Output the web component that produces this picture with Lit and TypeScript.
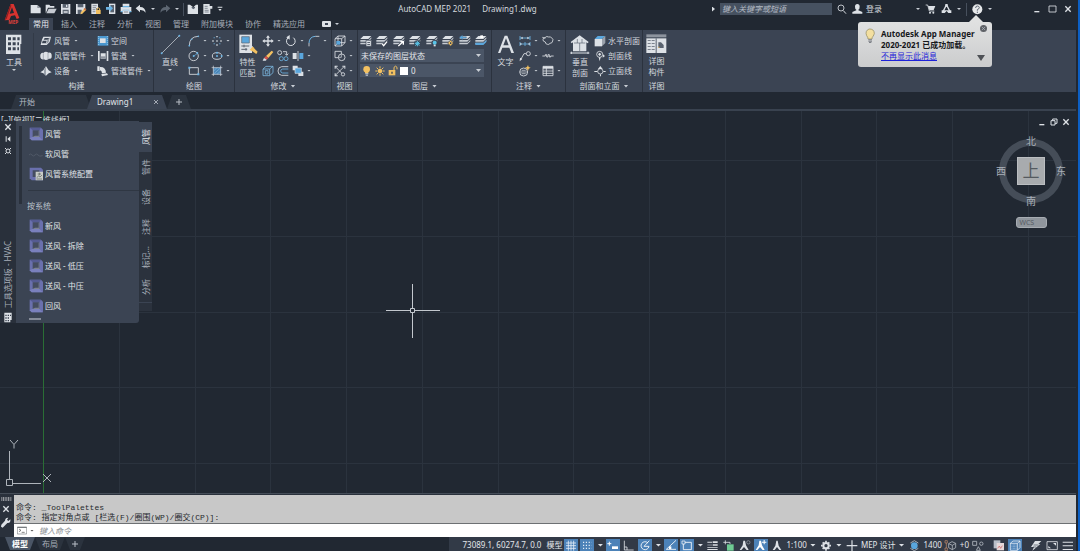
import { LitElement, html, css, svg, nothing } from "lit";
import { customElement, property } from "lit/decorators.js";
import { classMap } from "lit/directives/class-map.js";

const L = "#dde1e6";
const B = "#6bb3e3";
const Y = "#f3c161";
const D = "#3b4453";

type Glyph = [number, number, unknown];

/* Each glyph is drawn on a grid three times finer than its size in pixels. */
const glyphs: Record<string, Glyph> = {
  newFile: [12, 12, svg`<path fill=${L} d="M2 6h20l10 9v16H2z"/><path fill="#8d949e" d="M22 6v9h10z"/>`],
  open: [12, 12, svg`<path fill=${L} d="M2 5h11l3 4h12v5H9L3 29H2z"/><path fill="#c5cad1" d="M11 17h24l-7 14H4z"/>`],
  save: [12, 12, svg`<path fill=${L} d="M3 3h28v30H3z"/><path fill="#59626f" d="M8 3h17v11H8zM8 20h18v13H8z"/><path fill=${L} d="M18 5h4v7h-4zM11 24h12v2H11zM11 28h12v2H11z"/>`],
  saveAs: [12, 12, svg`<path fill=${L} d="M3 3h28v14L20 33H3z"/><path fill="#59626f" d="M8 3h17v10H8zM8 20h12v13H8z"/><path fill=${Y} d="M29 15l5 5-12 12-6 2 2-6z"/><path fill="#c46a4a" d="M29 15l5 5-3 3-5-5z"/>`],
  sheetLock: [12, 12, svg`<path fill=${L} d="M4 2h20v14h-5v17H4z"/><path stroke="#59626f" stroke-width="2" d="M8 8h12M8 14h10M8 20h8M8 26h8"/><path fill=${Y} d="M18 21h14v12H18z"/><path fill="none" stroke=${Y} stroke-width="3" d="M21 21v-4q4-5 8 0v4"/>`],
  sheetIn: [12, 12, svg`<path fill=${L} d="M12 2h19v31H12z"/><path fill="#59626f" d="M16 6h11v22H16z"/><path fill=${B} d="M3 12h11V6l10 10-10 10v-6H3z"/>`],
  print: [12, 12, svg`<path fill=${L} d="M8 2h20v8H8zM2 12h32v14H2z"/><path fill=${B} d="M8 9h20v4H8zM2 24h6v-4h20v4h6v4H2z"/><path fill=${L} d="M8 22h20v11H8z"/><path stroke="#59626f" stroke-width="2" d="M12 27h12"/>`],
  undo: [12, 12, svg`<path fill=${L} d="M2 16L15 5v7q16 0 17 17-5-9-17-8v7z"/>`],
  redo: [12, 12, svg`<path fill="#5d6672" d="M34 16L21 5v7Q5 12 4 29q5-9 17-8v7z"/>`],
  castle: [12, 12, svg`<path fill=${L} d="M2 5h7l10 8 8-8h6v28H2z"/><path fill="#59626f" d="M14 15l5 4 5-4v-3H14z"/>`],
  sheetEdit: [12, 12, svg`<path fill=${L} d="M4 3h19v6h8v8h-6v16H4z"/><path stroke="#59626f" stroke-width="2" d="M8 10h9M8 16h9M8 22h12M8 27h12"/>`],
  more: [6, 6, svg`<path fill=${L} d="M2 2h14v3H2zM4 9h10l-5 6z"/>`],
  logo: [18, 24, svg`<path fill="#d8332f" fill-rule="evenodd" d="M2 52L20 3h9l17 42-8 3-5-11-12 2-5 12zM24 13l-7 19 13-2z"/><path fill="#8e1f20" d="M2 52L20 3l2 5L8 47z"/><text x="13" y="63" font-size="14" font-weight="700" font-family="Open Sans, sans-serif" fill="#e0413b">MEP</text>`],
  building: [18, 21, svg`<path fill=${L} d="M3 2h46v28h-3v30H3z"/><path fill=${D} d="M9 10h9v9H9zM23 10h9v9h-9zM37 10h7v9h-7zM9 25h9v9H9zM23 25h9v9h-9zM37 25h5v9h-5zM9 40h9v9H9zM23 40h9v9h-9zM37 40h5v9h-5z"/>`],
  duct: [12, 12, svg`<path fill=${L} d="M10 5h23l-4 16-9 9H2l4-16z"/><path fill=${D} d="M14 9h14l-2 5H11zM8 17h12l-2 8H6z"/><path fill="#8d949e" d="M22 15l7-8-3 14-7 7z"/>`],
  fitting: [12, 12, svg`<path fill=${L} d="M1 14q3-7 9-5 7-7 15-1 9-2 10 6v8q-2 6-8 4-9 7-15 2-10 2-11-6z"/><path stroke="#8d949e" stroke-width="2" fill="none" d="M10 10v18M24 9v19"/>`],
  device: [12, 12, svg`<path fill=${L} d="M18 4l8 12 9 6-9 3-8 7-8-7-9-3 9-6z"/><path fill="#9aa1ab" d="M18 4v28l-6-7V14z"/>`],
  space: [12, 12, svg`<path fill="#4a97cf" d="M2 3h32v29H2z"/><path fill=${L} d="M9 10h17v14H9z"/><path stroke="#b9dcf3" stroke-width="2" d="M5 3v29M31 3v29" stroke-dasharray="3 3"/>`],
  pipe: [12, 12, svg`<path fill=${L} d="M3 3h5v30H3zM29 3h5v30h-5zM11 10h15v16H11z"/><path fill="#8d949e" d="M11 19h15v7H11z"/>`],
  elbow: [12, 12, svg`<path fill=${L} d="M1 4h7v14H1zM9 6q17-1 18 17l-12 2q0-8-6-9zM13 27l17-2 3 5-18 4z"/>`],
  line: [21, 21, svg`<path stroke=${L} stroke-width="2" d="M5 58L58 5"/><circle cx="5" cy="58" r="3" fill=${B}/><circle cx="58" cy="5" r="3" fill=${B}/>`],
  arc: [12, 12, svg`<path fill="none" stroke=${L} stroke-width="2.500" d="M4 32Q4 5 31 4"/><circle cx="4" cy="32" r="2.500" fill=${B}/><circle cx="31" cy="4" r="2.500" fill=${B}/><circle cx="11" cy="13" r="2.500" fill=${B}/>`],
  circle: [12, 12, svg`<circle cx="17" cy="18" r="14" fill="none" stroke=${L} stroke-width="2.500"/><path stroke=${B} stroke-width="2" d="M17 18l12-8"/><circle cx="17" cy="18" r="3" fill=${B}/><circle cx="28" cy="9" r="3" fill=${B}/>`],
  rect: [12, 12, svg`<path fill="none" stroke=${L} stroke-width="2.500" d="M4 8h27v20H4z"/><path fill=${B} d="M1 5h6v6H1zM28 25h6v6h-6z"/>`],
  points: [12, 12, svg`<path fill=${L} d="M16 3h4v4h-4zM4 16h4v4H4zM16 16h4v4h-4zM28 16h4v4h-4zM16 28h4v4h-4z"/><path fill=${B} d="M8 7h3v3H8zM25 7h3v3h-3zM8 25h3v3H8zM25 25h3v3h-3z"/>`],
  ellipse: [12, 12, svg`<ellipse cx="18" cy="18" rx="14" ry="10" fill="none" stroke=${L} stroke-width="2.500"/><circle cx="18" cy="18" r="3" fill=${B}/><circle cx="18" cy="8" r="3" fill=${B}/><circle cx="32" cy="18" r="3" fill=${B}/>`],
  hatch: [12, 12, svg`<path fill="#4a86b8" d="M7 8h22v20H7z"/><path stroke=${L} stroke-width="2" fill="none" d="M7 2v31M29 2v31M2 8h32M2 28h32"/><path stroke="#9bc9e8" stroke-width="1.500" d="M8 27L28 9M8 18l10-10M18 28l11-10"/>`],
  match: [20, 21, svg`<path fill=${L} d="M4 2h38v55H4z"/><path fill="#5aa6dc" stroke="#59626f" stroke-width="2" d="M11 8h23v19H11z"/><path stroke="#59626f" stroke-width="3" d="M10 36h24M10 46h18M18 32v8M24 42v8"/><path fill=${Y} d="M33 45l8-9 18 17-4 7z"/><path fill=${L} d="M28 45l11-12 6 5-12 13z"/><path fill=${Y} d="M44 38l5 4-8 9-6-4z"/>`],
  move: [12, 12, svg`<path fill=${L} d="M18 1l6 7h-4v8h8v-4l7 6-7 6v-4h-8v8h4l-6 7-6-7h4v-8H8v4l-7-6 7-6v4h8V8h-4z"/>`],
  rotate: [12, 12, svg`<path fill="none" stroke=${L} stroke-width="3" d="M10 8a13 13 0 1 0 15 0"/><path fill=${L} d="M14 0v14L4 7z"/>`],
  fillet: [12, 12, svg`<path fill="none" stroke=${B} stroke-width="3" d="M3 24Q4 5 22 4"/><path stroke=${L} stroke-width="2.500" d="M3 24v10M22 4h12"/>`],
  erase: [12, 12, svg`<path fill=${Y} d="M29 2l5 4-15 18-7-6z"/><path fill="#d9534a" d="M12 18l7 6-5 5-8-5z"/><path fill=${L} d="M6 24l8 5-3 3H2z"/>`],
  copy: [12, 12, svg`<circle cx="8" cy="8" r="6" fill="none" stroke=${L} stroke-width="2.500"/><circle cx="13" cy="26" r="6" fill="none" stroke=${B} stroke-width="2.500"/><circle cx="27" cy="26" r="6" fill="none" stroke=${B} stroke-width="2.500"/><path fill="none" stroke=${L} stroke-width="2.500" d="M18 5h11v10M24 11l5 5 5-5"/>`],
  mirror: [12, 12, svg`<path fill=${L} d="M2 9h12v18H2z"/><path fill="#5aa6dc" d="M22 9h12v18H22z"/><path stroke=${L} stroke-width="2.500" d="M18 3v30"/>`],
  offset3d: [12, 12, svg`<path fill="none" stroke="#79b5dc" stroke-width="2.500" d="M3 12h20v20H3zM3 12l9-8h21v19l-10 9M23 12l10-8M10 17h8v10h-8z"/>`],
  offset: [12, 12, svg`<path fill="none" stroke=${L} stroke-width="2.500" d="M34 5H14Q3 6 3 18t11 13h20"/><path fill="none" stroke=${B} stroke-width="2.500" d="M34 12H17q-6 1-6 6t6 6h17"/>`],
  stack: [12, 12, svg`<path fill=${L} d="M2 2h15v14H2zM19 20h15v13H19z"/><path fill="#5aa6dc" stroke=${L} stroke-width="2" d="M9 9h19v16H9z"/>`],
  cube: [12, 12, svg`<path fill="none" stroke=${L} stroke-width="2.500" d="M3 11h20v22H3zM3 11l9-8h21v20l-10 10M23 11l10-8M12 3v20h21M12 23L3 33"/><path fill="#5aa6dc" d="M7 18h12v11H7z"/>`],
  shapes: [12, 12, svg`<path fill="none" stroke=${L} stroke-width="2.500" d="M3 4h19v19H3z"/><circle cx="23" cy="22" r="10" fill=${D} stroke=${L} stroke-width="2.500"/><path stroke=${L} stroke-width="2" fill="none" d="M14 22h8v-9"/>`],
  cross: [12, 12, svg`<path fill="none" stroke=${L} stroke-width="2.500" d="M4 5l22 22M4 31L29 6"/><circle cx="27" cy="28" r="5" fill=${D} stroke=${L} stroke-width="2.500"/><path fill=${L} d="M2 2h9v3H5v6H2zM25 2h9v9h-3V5h-6zM2 25h3v6h6v3H2z"/>`],
  layer: [12, 12, svg`<path fill=${L} d="M10 3h24l-9 9H1z"/><path fill="#c5cad1" d="M1 15h25l8-8v4l-9 9H1zM1 23h25l8-8v4l-9 9H1z"/>`],
  bulb: [10, 12, svg`<circle cx="14" cy="13" r="10" fill=${Y}/><path fill=${Y} d="M9 18h10v7H9z"/><path fill="#c8ccd2" d="M10 25h9v3h-9zM11 29h7v3h-7z"/>`],
  sun: [12, 12, svg`<circle cx="18" cy="18" r="7" fill=${Y}/><path stroke=${Y} stroke-width="3" d="M18 4v6M18 26v6M4 18h6M26 18h6M8 8l4 4M24 24l4 4M28 8l-4 4M12 24l-4 4"/>`],
  lock: [10, 12, svg`<path fill=${Y} d="M2 15h20v16H2z"/><path fill="none" stroke=${Y} stroke-width="3" d="M18 15V7q5-7 9 0v6"/><path fill=${D} d="M10 20h4v6h-4z"/>`],
  textA: [18, 21, svg`<path fill=${L} fill-rule="evenodd" d="M3 57L23 5h8l20 52h-8l-6-16H16l-6 16zM19 34h16l-8-21z"/>`],
  dims: [12, 12, svg`<path stroke=${B} stroke-width="2.500" fill="none" d="M3 3v12M33 3v12M3 9h30M3 27h30M3 21v12M33 21v12M18 21v12"/><path fill=${L} d="M5 9l6-4v8zM31 9l-6-4v8zM9 27l-5-4v8zM27 27l5-4v8z"/>`],
  leader: [12, 12, svg`<circle cx="28" cy="11" r="6" fill="none" stroke=${L} stroke-width="2.500"/><path fill="none" stroke=${L} stroke-width="2.500" d="M22 11h-7L5 29"/><path fill=${L} d="M2 34l1-11 7 4z"/>`],
  tagGlobe: [12, 12, svg`<circle cx="14" cy="21" r="12" fill="none" stroke=${L} stroke-width="2.500"/><path stroke=${L} stroke-width="2" d="M3 21h23M8 16h12M8 26h12"/><path fill=${Y} d="M27 0l2 6 6 2-6 3-2 7-3-7-6-3 6-2z"/>`],
  cloud: [12, 12, svg`<path fill="none" stroke=${L} stroke-width="2.500" d="M9 8q5-6 11-2 7-2 9 3 6 3 3 9-1 7-8 7-3 5-8 3-6-1-6-7-8-2-7-7 0-6 6-6z"/><path stroke=${L} stroke-width="2.500" d="M1 7l9 3"/>`],
  breakLine: [12, 12, svg`<path fill="none" stroke=${L} stroke-width="2.500" d="M1 18h9v-4h4v7h4v-7h4v7h4v-3h9"/>`],
  table: [12, 12, svg`<path fill="none" stroke=${L} stroke-width="2.500" d="M3 4h30v28H3zM3 11h30M3 18h30M3 25h30M13 4v28"/><path fill=${L} d="M3 4h30v5H3z"/>`],
  house: [20, 21, svg`<path fill=${L} d="M29 4l27 20-3 4-4-3v27H9V25l-4 3-3-4z"/><path stroke="#59626f" stroke-width="2" fill="none" d="M12 27h34M29 27v24M22 27V15M36 27V15"/><path stroke=${L} stroke-width="3" d="M1 57h57M4 53v7M54 53v7"/>`],
  cubeSolid: [12, 12, svg`<path fill=${L} d="M2 12h22v22H2z"/><path fill="#5aa6dc" d="M2 12l9-9h23l-10 9z"/><path fill="#9aa1ab" d="M24 12l10-9v21L24 34z"/>`],
  pin: [12, 12, svg`<circle cx="17" cy="13" r="9" fill="none" stroke=${L} stroke-width="2.500"/><path fill=${L} d="M17 8l5 5-5 5-5-5zM14 22h6l-3 12zM27 13l6 5-7 5z"/>`],
  elev: [12, 12, svg`<circle cx="19" cy="19" r="8" fill="none" stroke=${L} stroke-width="2.500"/><path fill=${L} d="M1 18h9v3H1zM28 18h7v3h-7zM12 12l7-9 7 9zM18 28h3v6h-3z"/>`],
  detail: [21, 20, svg`<path fill="#8d949e" d="M1 1h60v9H1z"/><path fill=${L} d="M1 13h60v44H1z"/><path fill="#59626f" d="M29 13h3v44h-3zM5 18h9v2H5zM17 18h9v2h-9zM5 27h9v2H5zM17 27h9v2h-9zM5 36h9v2H5zM17 36h9v2h-9zM5 45h9v2H5zM17 45h9v2h-9zM37 25h8l8 8v9H37z"/><path fill=${Y} d="M37 38h3v4h-3z"/>`],
  search: [10, 11, svg`<circle cx="12" cy="12" r="9" fill="none" stroke=${L} stroke-width="2.500"/><path stroke=${L} stroke-width="3" d="M19 20l8 9"/>`],
  person: [11, 12, svg`<path fill=${L} d="M16 3q7 0 7 8t-4 9v2l12 5v5H1v-5l12-5v-2q-4-1-4-9t7-8z"/>`],
  cart: [11, 12, svg`<path fill="none" stroke=${L} stroke-width="2.500" d="M2 6h6l5 18h15"/><path fill=${L} d="M9 9h22l-5 12H13z"/><circle cx="15" cy="29" r="3" fill=${L}/><circle cx="25" cy="29" r="3" fill=${L}/>`],
  share: [11, 12, svg`<path fill="none" stroke=${L} stroke-width="4" d="M16 6L6 26M17 6l10 20"/><path fill=${L} d="M13 3h7v8h-7zM2 22h29v8h-9l-5-6-6 6H2z"/>`],
  help: [11, 11, svg`<circle cx="16" cy="16" r="15" fill="#e6e8ea"/><path fill="none" stroke="#59626f" stroke-width="3" d="M11 12q0-6 5-6t6 5q0 3-6 6v3M16 23v4"/>`],
  minimize: [8, 10, svg`<path fill=${L} d="M4 21h15v4H4z"/>`],
  maximize: [9, 10, svg`<path fill="none" stroke=${L} stroke-width="2.500" d="M3 6h21v18H3z"/>`],
  restore: [8, 8, svg`<path fill="none" stroke=${L} stroke-width="3" d="M3 8h12v13H3zM8 8V3h13v13h-6"/>`],
  close: [8, 8, svg`<path stroke=${L} stroke-width="4" d="M4 4l16 16M20 4L4 20"/>`],
  closeThin: [6, 6, svg`<path stroke="#b8bec6" stroke-width="2.500" d="M3 3l12 12M15 3L3 15"/>`],
  plus: [8, 8, svg`<path stroke="#b8bec6" stroke-width="3" d="M12 3v18M3 12h18"/>`],
  pinBar: [8, 8, svg`<path fill=${L} d="M5 4h3v16H5zM19 4v16l-9-8z"/>`],
  gearSmall: [8, 8, svg`<circle cx="12" cy="12" r="6" fill="none" stroke=${L} stroke-width="3"/><path stroke=${L} stroke-width="3" d="M3 3l5 5M16 16l5 5M21 3l-5 5M8 16l-5 5"/>`],
  sheetGrid: [8, 11, svg`<path fill=${L} d="M1 2h22v22h-4v7H1z"/><path fill="#3a4250" d="M4 8h4v4H4zM11 8h4v4h-4zM18 8h3v4h-3zM4 16h4v4H4zM11 16h4v4h-4zM4 24h4v4H4zM11 24h4v4h-4z"/>`],
  ductBlue: [14, 14, svg`<path fill="#6a70ad" d="M2 2h34l6 6v32H8L2 34z"/><path fill="#555b92" d="M2 2h34l-5 8H11z"/><path fill="#7a80bd" d="M2 34l9-5h20l10 11H8z"/><path fill="#454d60" d="M11 10h20v20H11z"/><path fill="#7c828f" d="M12 29l6-3h11V11h2v19H12z"/>`],
  flex: [14, 14, svg`<path fill="none" stroke="#5b6471" stroke-width="2" d="M0 24q5-6 9 0t9 0 9 0 14 2"/>`],
  ductCfg: [14, 14, svg`<path fill="#6a70ad" d="M2 2h34l6 6v32H8L2 34z"/><path fill="#454d60" d="M11 10h20v20H11z"/><path fill="#c9cdc8" d="M20 14h22v26H20z"/><path stroke="#555d5a" stroke-width="2" fill="none" d="M23 32l6-5 4 3 6-6M31 17v8M26 21h10M23 36h16"/>`],
  bulbOutline: [10, 16, svg`<path fill="#f3dfa0" stroke="#8b8457" stroke-width="2" d="M9 33q0-6-4-10-6-14 7-20 15-1 16 13-1 5-4 9-3 3-3 8z"/><path fill="#7d8087" d="M10 34h11v3H10zM10 38h11v3H10zM12 42h7v3h-7z"/>`],
  prompt: [10, 9, svg`<path fill="none" stroke="#777c80" stroke-width="2" d="M1 3h28v21H1z"/><path fill="none" stroke="#444" stroke-width="2" d="M6 9l6 4-6 4M14 19h9"/><path fill="#777c80" d="M1 3h28v3H1z"/>`],
  grip: [11, 4, svg`<path stroke="#fff" stroke-width="3" stroke-dasharray="3 2" d="M1 3h31M1 9h31"/>`],
  wrench: [10, 11, svg`<path fill=${L} d="M28 7l-6 5-4-4 4-6q-9-1-10 9L1 23l-1 6 5 3 14-14q11 1 9-11z"/>`],
  grid: [14, 13, svg`<path stroke="#e4edf6" stroke-width="2.500" d="M13 5v30M21 5v30M29 5v30M6 12h30M6 20h30M6 28h30"/>`],
  dots: [14, 13, svg`<path stroke="#e4edf6" stroke-width="3.500" stroke-dasharray="3.500 5" d="M9 10h26M9 19h26M9 28h26"/>`],
  snap: [14, 13, svg`<path stroke="#fff" stroke-width="3" d="M4 14h12M10 8v12"/><path fill="#fff" d="M18 22h18v8H18z"/>`],
  ortho: [14, 13, svg`<path fill="none" stroke=${L} stroke-width="2.500" d="M7 5v28h28M7 24h8v9"/>`],
  polar: [14, 13, svg`<path fill="none" stroke="#fff" stroke-width="2.500" d="M30 12a12 12 0 1 0 3 10H18L34 5"/>`],
  angle: [14, 13, svg`<path fill="none" stroke="#fff" stroke-width="2.500" d="M36 4L7 31h29"/><path fill="#fff" d="M15 22h7v8h-7z"/>`],
  osnap: [14, 13, svg`<path fill="none" stroke="#fff" stroke-width="2.500" d="M10 10h24v22H10z"/><path fill="#4c82b8" stroke="#fff" stroke-width="2" d="M6 6h9v9H6z"/>`],
  weights: [14, 13, svg`<path fill=${L} d="M4 8h14v3H4zM20 7h15v5H20zM4 17h14v2H4zM20 16h15v4H20zM4 24h31v2H4zM4 30h31v3H4z"/>`],
  cycle: [14, 13, svg`<path fill="#6ecb93" d="M15 16h20v19H15z"/><path stroke=${L} stroke-width="2.500" fill="none" d="M4 10h20v5M10 4v12"/>`],
  annoVis: [14, 13, svg`<path fill=${L} d="M16 5h5l3 14 8 14h-6l-8-9-8 9H5l9-14z"/><circle cx="31" cy="10" r="5" fill="none" stroke="#9aa1ab" stroke-width="2"/>`],
  annoAuto: [14, 13, svg`<path fill="#fff" d="M16 5h5l3 14 8 14h-6l-8-9-8 9H5l9-14zM29 3h3v5h5v3h-5v5h-3v-5h-5V8h5z"/>`],
  anno: [14, 13, svg`<path fill=${L} d="M19 5h4l3 15 8 13h-6l-7-9-7 9H8l8-13z"/>`],
  gear: [14, 13, svg`<circle cx="21" cy="20" r="8" fill="none" stroke=${L} stroke-width="6"/><path stroke=${L} stroke-width="5" d="M21 5v5M21 30v5M6 20h5M31 20h5M11 10l3 3M28 27l3 3M31 10l-3 3M14 27l-3 3"/>`],
  plusBig: [14, 13, svg`<path stroke=${L} stroke-width="3.500" d="M21 4v32M5 20h32"/>`],
  planeCut: [14, 13, svg`<circle cx="19" cy="20" r="10" fill="#5aa6dc"/><path fill="none" stroke=${L} stroke-width="2" d="M7 12l12-7 12 7M7 28l12 7 12-7"/>`],
  boxes: [14, 13, svg`<path fill="none" stroke="#aeb4bc" stroke-width="2.500" d="M14 14l10-6 11 5v13l-10 6-11-6zM14 14l11 5 10-6M25 19v13"/><path fill="none" stroke="#c98f6d" stroke-width="2" d="M3 5h7v7H3zM3 27h7v8H3zM7 12v15"/>`],
  isolate: [14, 13, svg`<path fill="none" stroke="#b4bac2" stroke-width="2.500" d="M5 7h12v12H5zM16 34l6-11 6 11z"/><circle cx="31" cy="14" r="5" fill="none" stroke="#b4bac2" stroke-width="2.500"/>`],
  pagesRed: [14, 13, svg`<path fill="#b9bfc8" d="M5 4h20v24H5z"/><path fill="#e6d9d9" d="M14 12h22v22H14z"/><path fill="none" stroke="#c95858" stroke-width="2" d="M17 28l5-7 4 7 5-8"/>`],
  hatchCube: [14, 13, svg`<path fill="none" stroke="#fff" stroke-width="2" d="M7 13l8-7h21v20l-8 8H7zM7 13h21v21M28 13l8-7"/><path stroke="#cfe2f3" stroke-width="2" stroke-dasharray="2 2" d="M11 18h14M11 23h14M11 28h14"/>`],
  bolt: [14, 13, svg`<path fill=${L} d="M18 6h19l-9 9h6L10 35l5-11H6z"/><path stroke="#3a4250" stroke-width="2" d="M14 18h14M12 24h10"/>`],
  screen: [14, 13, svg`<path fill="none" stroke=${L} stroke-width="2.500" d="M6 8h31v24H6z"/><path fill=${L} d="M24 12h9v8zM10 28v-7l8 7z"/>`],
  menu: [14, 13, svg`<path fill=${L} d="M5 8h31v3H5zM5 19h31v3H5zM5 30h31v3H5z"/>`],
};

const layerMarks: Record<string, unknown> = {
  props: svg`<path fill=${L} stroke=${D} stroke-width="2" d="M18 16h16v18H18z"/><path fill="#59626f" d="M22 21h8v3h-8zM22 27h8v3h-8z"/>`,
  check: svg`<path fill="none" stroke=${D} stroke-width="8" d="M18 26l5 6 10-12"/><path fill="none" stroke="#fff" stroke-width="4" d="M18 26l5 6 10-12"/>`,
  arrow: svg`<path fill="none" stroke=${D} stroke-width="8" d="M16 33l14-13"/><path fill="none" stroke="#fff" stroke-width="4" d="M16 33l14-13M22 20h9v9"/>`,
  freeze: svg`<circle cx="25" cy="26" r="10" fill=${D}/><path stroke="#58c4e8" stroke-width="3" d="M25 18v16M17 26h16M19 20l12 12M31 20L19 32"/>`,
  off: svg`<circle cx="26" cy="25" r="10" fill=${D}/><circle cx="26" cy="23" r="6" fill="#58c4e8"/><path fill=${L} d="M23 29h6v5h-6z"/>`,
  lockMark: svg`<path fill=${Y} stroke=${D} stroke-width="2" d="M26 15l8 9-8 10-9-10z"/><path fill=${D} d="M24 22h4v5h-4z"/>`,
  prev: svg`<path fill="#5aa6dc" stroke=${D} d="M0 7l11-7v5h11v5H11v5z"/>`,
  match: svg`<path fill="#5aa6dc" d="M1 23h25l8-8v6l-9 9H1z"/><path fill="#fff" d="M16 1h8v8h-8z"/>`,
};

const paint = (name: string) => {
  const [w, h, body] = glyphs[name];
  return html`<svg class="glyph" width=${w} height=${h} viewBox="0 0 ${w * 3} ${h * 3}" aria-hidden="true">${body}</svg>`;
};

const caret = html`<span class="caret"></span>`;

const base = css`
  * { box-sizing: border-box; }
  button {
    display: flex; align-items: center; justify-content: center;
    background: none; border: 0; padding: 0; margin: 0;
    font: inherit; color: inherit; white-space: nowrap; cursor: default;
  }
  .glyph { display: block; flex: none; }
  .caret {
    flex: none; width: 4px; height: 2px; background: #c9ced5;
    clip-path: polygon(0 0, 100% 0, 50% 100%);
  }
`;

@customElement("ribbon-panel")
class RibbonPanel extends LitElement {
  @property() label = "";
  @property({ type: Boolean }) expandable = false;
  static styles = [base, css`
    :host { display: flex; flex-direction: column; border-right: 1px solid #2b323e; padding-top: 3px; }
    .body { display: flex; flex: 1; }
    .title { display: flex; align-items: center; justify-content: center; gap: 4px; height: 12px; line-height: 12px; white-space: nowrap; }
    .title .caret { height: 3px; width: 5px; }
  `];
  render() {
    return html`<div class="body"><slot></slot></div>
      <div class="title">${this.label}${this.expandable ? caret : nothing}</div>`;
  }
}

@customElement("view-cube")
class ViewCube extends LitElement {
  static styles = [base, css`
    :host { display: flex; flex-direction: column; align-items: center; gap: 9px; }
    .compass { display: grid; grid-template: 14px 1fr 14px / 14px 1fr 14px; place-items: center; width: 74px; height: 74px; position: relative; font-size: 10px; line-height: 14px; color: #a9b0b8; }
    .ring { position: absolute; inset: 5px; border: 7px solid #454d58; border-radius: 50%; }
    .n, .s, .w, .e { z-index: 1; }
    .n { grid-area: 1 / 2; } .w { grid-area: 2 / 1; } .e { grid-area: 2 / 3; } .s { grid-area: 3 / 2; }
    .top { grid-area: 2 / 2; width: 28px; height: 28px; background: #a8abae; border: 1px solid #bbbec1; color: #555a60; font-size: 17px; line-height: 26px; z-index: 1; }
    .wcs { width: 31px; height: 11px; justify-content: flex-start; padding-left: 3px; border-radius: 3px; background: #8f959c; border: 1px solid #a7acb2; color: #565c64; font-size: 7px; line-height: 9px; }
  `];
  render() {
    return html`<div class="compass"><span class="ring"></span>
        <button class="n">北</button><button class="w">西</button>
        <button class="top">上</button>
        <button class="e">东</button><button class="s">南</button></div>
      <button class="wcs">WCS</button>`;
  }
}

@customElement("app-root")
class AppRoot extends LitElement {
  static styles = [base, css`
    :host {
      display: flex; flex-direction: column; height: 100vh; overflow: hidden; position: relative;
      background: #212832; border-right: 2px solid #0c5fc4; padding-right: 2px; color: #d3d8de;
      font: 8px/12px "Noto Sans", "Noto Sans CJK SC", sans-serif;
    }
    .header { display: flex; height: 30px; flex: none; }
    .logo { width: 28px; padding: 3px 0 0 4px; flex: none; }
    .headRows { flex: 1; display: flex; flex-direction: column; }
    .titleBar { display: flex; align-items: center; height: 18px; }
    .qat { display: flex; align-items: center; gap: 3px; padding-left: 2px; }
    .qat .caret { margin: 0 1px; }
    .rule { width: 1px; height: 13px; background: #47505d; }
    .appTitle { flex: 1; display: flex; justify-content: center; gap: 11px; font-size: 8px; margin: 0; font-weight: 400; white-space: nowrap; }
    .right { display: flex; align-items: center; gap: 5px; }
    .side { width: 3px; height: 5px; background: #dde1e6; clip-path: polygon(0 0, 100% 50%, 0 100%); }
    .find { width: 112px; height: 12px; border: 0; padding: 0 2px; background: #465160; color: #dde1e6; font: italic 8px/12px "Noto Sans", "Noto Sans CJK SC", sans-serif; outline: none; }
    .find::placeholder { color: #b4bbc4; }
    .login { gap: 3px; }
    .account { margin-left: 29px; }
    .winBtns { display: flex; align-items: center; gap: 7px; margin-left: 36px; padding-right: 4px; }
    .menuTabs { display: flex; align-items: center; gap: 4px; height: 12px; padding-left: 1px; color: #a7aeb8; }
    .menuTab { height: 12px; padding: 0 4px; }
    .menuTab.on { background: #3b4453; color: #e6e9ed; }
    .badge { width: 9px; height: 6px; background: #dde1e6; border-radius: 1px; margin-left: 9px; }
    .badge::after { content: ""; width: 3px; height: 2px; background: #3b4453; }

    .ribbon { display: flex; height: 62px; flex: none; background: #3b4453; }
    .big { display: flex; flex-direction: column; justify-content: flex-start; align-items: center; width: 28px; line-height: 11px; padding-top: 1px; }
    .big .glyph { margin-bottom: 1px; }
    .big .caret { margin-top: 2px; }
    .big span { white-space: pre-line; }
    .col { display: flex; flex-direction: column; }
    .row { display: flex; align-items: center; height: 15px; }
    .cmd { gap: 2px; }
    .cmd .caret { margin-left: 2px; }
    .ic { gap: 3px; width: 23px; justify-content: flex-start; }
    .ic.solo { width: 15px; }
    .build { width: 154px; } .draw { width: 81px; } .modify { width: 97px; }
    .views { width: 26px; } .layers { width: 134px; } .note { width: 74px; }
    .section { width: 77px; } .detail { width: 27px; border: 0; }
    .tools { width: 34px; border-right: 1px solid #323a47; height: 47px; }
    .build .col { padding-left: 6px; width: 57px; }
    .draw .big { width: 32px; }
    .draw .col, .modify .col, .views .col { padding-left: 2px; }
    .layers .col { flex: 1; padding: 0 4px 0 2px; }
    .layerTools { justify-content: space-between; }
    .combo { display: flex; align-items: center; height: 13px; margin: 1px 3px 1px 0; padding: 0 3px 0 0; background: #4b5667; }
    .combo select { appearance: none; flex: 1; min-width: 0; border: 0; padding: 0 1px; background: none; color: #e3e6ea; font: inherit; height: 12px; line-height: 12px; outline: none; }
    .combo .caret { width: 5px; height: 3px; }
    .combo .glyph { margin-left: 2px; }
    .swatch { width: 8px; height: 8px; background: #fff; margin: 0 2px; }

    .files { display: flex; height: 17px; padding: 3px 0 0 11px; flex: none; align-items: flex-start; }
    .fileTab { height: 14px; width: 80px; padding: 0 8px; justify-content: flex-start; background: #2c343f; color: #b3bac3; clip-path: polygon(5px 0, calc(100% - 5px) 0, 100% 100%, 0 100%); }
    .fileTab.on { background: #3b4453; color: #e3e6ea; justify-content: space-between; margin-left: -4px; padding: 0 8px 0 10px; }
    .fileTab.add { width: 24px; padding: 0; justify-content: center; }
    .edge { height: 2px; background: #39424f; flex: none; }

    .canvas { flex: 1; position: relative; overflow: hidden; min-height: 0; }
    .drawing { position: absolute; inset: 0; width: 100%; height: 100%; }
    .viewLabel { position: absolute; left: 1px; top: 3px; color: #d3d8de; }
    .docBtns { position: absolute; right: 6px; top: 6px; display: flex; align-items: center; gap: 4px; }
    view-cube { position: absolute; right: 8px; top: 23px; }
    .ucs { position: absolute; left: 4px; bottom: 6px; }
    .cursor { position: absolute; left: 386px; top: 173px; }

    .palette { position: absolute; left: 0; top: 10px; height: 202px; display: flex; align-items: flex-start; }
    .spine { display: flex; flex-direction: column; align-items: center; gap: 4px; width: 16px; height: 100%; padding: 2px 0 0; background: #29303b; color: #a7aeb8; }
    .vertTitle { writing-mode: vertical-rl; text-orientation: sideways; transform: rotate(180deg); margin-top: auto; line-height: 12px; }
    .list { width: 123px; height: 100%; background: #3b4453; border-radius: 0 0 3px 0; padding: 3px 0 0 3px; display: flex; gap: 5px; overflow: hidden; }
    .track { width: 3px; height: 78px; background: #2a313c; margin-top: 2px; flex: none; }
    .items { flex: 1; display: flex; flex-direction: column; color: #e0e4e8; }
    .item { height: 20px; flex: none; justify-content: flex-start; gap: 2px; padding-left: 2px; }
    .split { height: 1px; background: #2f3743; margin: 6px 0 9px 1px; flex: none; }
    .groupName { color: #bcc3cb; height: 16px; flex: none; }
    .peek { width: 12px; height: 2px; margin: 2px 0 0 2px; background: #858b98; flex: none; }
    .vtabs { display: flex; flex-direction: column; margin-top: 1px; width: 13px; background: #2b323d; }
    .vtab { width: 13px; height: 30px; color: #a7aeb8; }
    .vtab span { writing-mode: vertical-rl; text-orientation: sideways; transform: rotate(180deg); line-height: 12px; }
    .vtab.on { background: #3b4453; color: #e6e9ed; }
    .vfoot { height: 9px; border-top: 1px solid #3b4453; }

    .command { display: flex; height: 44px; flex: none; background: #2a313c; border-top: 1px solid #454d58; }
    .cmdSide { width: 14px; display: flex; flex-direction: column; align-items: center; gap: 4px; padding: 3px 2px 0 0; flex: none; }
    .cmdMain { flex: 1; display: flex; flex-direction: column; padding-top: 1px; }
    .history { height: 29px; background: #c8c8c8; color: #26292d; border-bottom: 1px solid #6d7073; padding: 8px 2px 0; font: 8px/10px "Liberation Mono", "Noto Sans CJK SC", monospace; white-space: pre; }
    .prompt { display: flex; align-items: center; gap: 3px; height: 13px; background: #fff; padding-left: 3px; }
    .prompt .caret { background: #555; }
    .prompt input { flex: 1; border: 0; padding: 0 2px; height: 12px; background: none; font: italic 8px/12px "Noto Sans", "Noto Sans CJK SC", sans-serif; outline: none; }
    .prompt input::placeholder { color: #8b8f94; }

    .status { display: flex; height: 14px; flex: none; justify-content: space-between; }
    .layouts { display: flex; padding-left: 5px; color: #a7aeb8; }
    .layout { width: 30px; height: 13px; background: #2b333e; clip-path: polygon(0 0, 100% 0, calc(100% - 5px) 100%, 5px 100%); }
    .layout.on { background: #4a5565; color: #fff; font-weight: 700; }
    .layout.add { width: 20px; }
    .states { display: flex; align-items: center; gap: 2px; height: 14px; padding: 2px 1px 0 14px; background: #323a47; color: #e3e6ea; }
    .coords { margin-right: 3px; white-space: nowrap; }
    .tg { width: 14px; height: 13px; flex: none; }
    .tg.on { background: #4c82b8; }
    .drop { width: 8px; height: 13px; }
    .drop .caret { width: 6px; height: 3px; background: #dde1e6; }
    .pad { margin-left: 3px; }

    .balloon { position: absolute; right: 86px; top: 22px; width: 134px; height: 45px; padding: 6px 4px 0 7px; display: flex; gap: 6px; border-radius: 3px; background: linear-gradient(#e0e1e1, #cbcccd); color: #16181b; }
    .balloon::before { content: ""; position: absolute; right: 9px; top: -7px; width: 14px; height: 7px; background: #e0e1e1; clip-path: polygon(50% 0, 100% 100%, 0 100%); }
    .msg { flex: 1; line-height: 11px; white-space: nowrap; }
    .msg strong { display: block; }
    .msg a { color: #1e22d8; }
    .dismiss { position: absolute; right: 5px; top: 3px; width: 7px; height: 7px; border-radius: 50%; background: #5d6065; }
    .dismiss .glyph { width: 5px; height: 5px; }
    .expand { position: absolute; right: 7px; bottom: 6px; width: 8px; height: 6px; background: #4e5156; clip-path: polygon(0 0, 100% 0, 50% 100%); }
  `];

  private ic(name: string, title: string, drop = true) {
    return html`<button class=${classMap({ ic: true, solo: !drop })} title=${title} aria-label=${title}>${paint(name)}${drop ? caret : nothing}</button>`;
  }
  private cmd(name: string, text: string, drop = false) {
    return html`<div class="row"><button class="cmd">${paint(name)}${text}${drop ? caret : nothing}</button></div>`;
  }
  private big(name: string, text: string, drop = false) {
    return html`<button class="big">${paint(name)}<span>${text}</span>${drop ? caret : nothing}</button>`;
  }
  private bare(name: string, title: string) {
    return html`<button title=${title} aria-label=${title}>${paint(name)}</button>`;
  }
  private tg(name: string, title: string, on = false) {
    return html`<button class=${classMap({ tg: true, on })} title=${title} aria-label=${title}>${paint(name)}</button>`;
  }
  private drop(title: string) {
    return html`<button class="drop" aria-label=${title}>${caret}</button>`;
  }
  private layerTool(mark: string) {
    return html`<button aria-label="图层 ${mark}"><svg class="glyph" width="12" height="12" viewBox="0 0 36 36">${glyphs.layer[2]}${layerMarks[mark]}</svg></button>`;
  }

  private header() {
    return html`<header class="header">
      <div class="logo">${paint("logo")}</div>
      <div class="headRows">
        <div class="titleBar">
          <div class="qat">
            ${["newFile", "open", "save", "saveAs", "sheetLock", "sheetIn", "print", "undo"].map((n) => this.bare(n, n))}
            ${caret}${this.bare("redo", "redo")}${caret}<span class="rule"></span>
            ${["castle", "sheetEdit", "more"].map((n) => this.bare(n, n))}
          </div>
          <h1 class="appTitle"><span>AutoCAD MEP 2021</span><span>Drawing1.dwg</span></h1>
          <div class="right">
            <span class="side"></span>
            <input class="find" aria-label="搜索" placeholder="键入关键字或短语" />
            ${this.bare("search", "搜索")}
            <button class="login">${paint("person")}登录</button>
            <span class="account caret"></span>
            ${this.bare("cart", "商店")}${this.bare("share", "Autodesk")}${caret}
            <span class="rule"></span>${this.bare("help", "帮助")}${caret}
            <div class="winBtns">${this.bare("minimize", "最小化")}${this.bare("maximize", "最大化")}${this.bare("close", "关闭")}</div>
          </div>
        </div>
        <nav class="menuTabs">
          ${["常用", "插入", "注释", "分析", "视图", "管理", "附加模块", "协作", "精选应用"].map(
            (t, i) => html`<button class=${classMap({ menuTab: true, on: i === 0 })}>${t}</button>`)}
          <button class="badge" aria-label="显示选项"></button>${caret}
        </nav>
      </div>
    </header>`;
  }

  private ribbon() {
    return html`<div class="ribbon">
      <ribbon-panel class="build" label="构建">
        <div class="tools">${this.big("building", "工具", true)}</div>
        <div class="col">${this.cmd("duct", "风管", true)}${this.cmd("fitting", "风管管件", true)}${this.cmd("device", "设备", true)}</div>
        <div class="col">${this.cmd("space", "空间")}${this.cmd("pipe", "管道", true)}${this.cmd("elbow", "管道管件", true)}</div>
      </ribbon-panel>
      <ribbon-panel class="draw" label="绘图">
        ${this.big("line", "直线", true)}
        <div class="col">
          <div class="row">${this.ic("arc", "圆弧")}${this.ic("points", "点")}</div>
          <div class="row">${this.ic("circle", "圆")}${this.ic("ellipse", "椭圆")}</div>
          <div class="row">${this.ic("rect", "矩形")}${this.ic("hatch", "填充")}</div>
        </div>
      </ribbon-panel>
      <ribbon-panel class="modify" label="修改" expandable>
        ${this.big("match", "特性\n匹配")}
        <div class="col">
          <div class="row">${this.ic("move", "移动")}${this.ic("rotate", "旋转")}${this.ic("fillet", "圆角")}</div>
          <div class="row">${this.ic("erase", "删除", false)}${this.ic("copy", "复制", false)}${this.ic("mirror", "镜像")}</div>
          <div class="row">${this.ic("offset3d", "拉伸", false)}${this.ic("offset", "偏移", false)}${this.ic("stack", "顺序")}</div>
        </div>
      </ribbon-panel>
      <ribbon-panel class="views" label="视图">
        <div class="col">
          <div class="row">${this.ic("cube", "视图")}</div>
          <div class="row">${this.ic("shapes", "样式")}</div>
          <div class="row">${this.ic("cross", "缩放")}</div>
        </div>
      </ribbon-panel>
      <ribbon-panel class="layers" label="图层" expandable>
        <div class="col">
          <div class="row layerTools">${Object.keys(layerMarks).map((m) => this.layerTool(m))}</div>
          <div class="combo"><select aria-label="图层状态"><option>未保存的图层状态</option></select>${caret}</div>
          <div class="combo">${paint("bulb")}${paint("sun")}${paint("lock")}<span class="swatch"></span>
            <select aria-label="图层"><option>0</option></select>${caret}</div>
        </div>
      </ribbon-panel>
      <ribbon-panel class="note" label="注释" expandable>
        ${this.big("textA", "文字")}
        <div class="col">
          <div class="row">${this.ic("dims", "标注")}${this.ic("cloud", "云线")}</div>
          <div class="row">${this.ic("leader", "引线")}${this.ic("breakLine", "折断", false)}</div>
          <div class="row">${this.ic("tagGlobe", "标记")}${this.ic("table", "表格")}</div>
        </div>
      </ribbon-panel>
      <ribbon-panel class="section" label="剖面和立面" expandable>
        ${this.big("house", "垂直\n剖面")}
        <div class="col">${this.cmd("cubeSolid", "水平剖面")}${this.cmd("pin", "剖面线")}${this.cmd("elev", "立面线")}</div>
      </ribbon-panel>
      <ribbon-panel class="detail" label="详图">${this.big("detail", "详图\n构件")}</ribbon-panel>
    </div>`;
  }

  private drawing() {
    const step = 75.75;
    const xs = Array.from({ length: 40 }, (_, i) => Math.round(43 + step * (i + 1)));
    const ys = Array.from({ length: 20 }, (_, i) => Math.round(49 + step * i));
    return html`<svg class="drawing" aria-hidden="true">
        ${xs.map((x) => svg`<path stroke="#2b333e" d=${`M${x + 0.5} 0v3000`}/>`)}
        ${ys.map((y) => svg`<path stroke="#2b333e" d=${`M0 ${y + 0.5}h4000`}/>`)}
        <path stroke="#2a6e35" d="M43.500 0v3000"/>
      </svg>
      <svg class="ucs" width="52" height="54" viewBox="0 0 52 54" aria-hidden="true">
        <path fill="none" stroke="#aeb4bb" d="M5.500 18v28M9 50.500h28M2.500 46.500h6v6h-6zM6 7l4 4.500v4M14 7l-4 4.500M39 41l8 8M47 41l-8 8"/>
      </svg>
      <svg class="cursor" width="54" height="54" viewBox="0 0 54 54" aria-hidden="true">
        <path fill="none" stroke="#c3c8ce" d="M26.500 0v24M26.500 29v25M0 26.500h24M29 26.500h25M24.500 24.500h4v4h-4z"/>
      </svg>`;
  }

  private palette() {
    const item = (g: string, t: string) => html`<button class="item">${paint(g)}${t}</button>`;
    return html`<aside class="palette">
      <div class="spine">
        ${this.bare("close", "关闭")}${this.bare("pinBar", "自动隐藏")}${this.bare("gearSmall", "特性")}
        <span class="vertTitle">工具选项板 - HVAC</span>
        ${paint("sheetGrid")}
      </div>
      <div class="list">
        <span class="track"></span>
        <div class="items">
          ${item("ductBlue", "风管")}${item("flex", "软风管")}${item("ductCfg", "风管系统配置")}
          <span class="split"></span>
          <span class="groupName">按系统</span>
          ${["新风", "送风 - 拆除", "送风 - 低压", "送风 - 中压", "回风"].map((t) => item("ductBlue", t))}
          <span class="peek"></span>
        </div>
      </div>
      <div class="vtabs">
        ${["风管", "管件", "设备", "注释", "标记...", "分析"].map(
          (t, i) => html`<button class=${classMap({ vtab: true, on: i === 0 })}><span>${t}</span></button>`)}
        <span class="vfoot"></span>
      </div>
    </aside>`;
  }

  private status() {
    return html`<footer class="status">
      <div class="layouts">
        <button class="layout on">模型</button><button class="layout">布局</button>
        <button class="layout add" aria-label="新建布局">${paint("plus")}</button>
      </div>
      <div class="states">
        <span class="coords">73089.1, 60274.7, 0.0</span><button>模型</button>
        ${this.tg("grid", "栅格", true)}${this.tg("dots", "捕捉", true)}${this.drop("捕捉选项")}
        ${this.tg("snap", "动态输入", true)}${this.tg("ortho", "正交")}${this.tg("polar", "极轴", true)}${this.drop("极轴选项")}
        ${this.tg("angle", "追踪", true)}${this.tg("osnap", "对象捕捉", true)}${this.drop("对象捕捉选项")}
        ${this.tg("weights", "线宽")}${this.tg("cycle", "选择循环")}${this.tg("annoVis", "注释可见性")}${this.tg("annoAuto", "自动缩放", true)}${this.tg("anno", "注释比例")}
        <button>1:100</button>${this.drop("比例")}${this.tg("gear", "设置")}${this.drop("工作空间")}${this.tg("plusBig", "监视器")}
        <button>MEP 设计</button>${this.drop("显示配置")}
        ${this.tg("planeCut", "剖切平面")}<button>1400</button>
        ${this.tg("boxes", "标高")}<button>+0</button>
        ${this.tg("isolate", "隔离")}<span class="pad"></span>${this.tg("pagesRed", "图纸")}${this.tg("hatchCube", "硬件加速", true)}
        <span class="pad"></span>${this.tg("bolt", "性能")}${this.tg("screen", "全屏")}${this.tg("menu", "自定义")}
      </div>
    </footer>`;
  }

  render() {
    return html`
      ${this.header()}
      ${this.ribbon()}
      <div class="files">
        <button class="fileTab">开始</button>
        <button class="fileTab on">Drawing1${paint("closeThin")}</button>
        <button class="fileTab add" aria-label="新图形">${paint("plus")}</button>
      </div>
      <div class="edge"></div>
      <main class="canvas">
        ${this.drawing()}
        <span class="viewLabel">[−][俯视][二维线框]</span>
        ${this.palette()}
        <div class="docBtns">${this.bare("minimize", "最小化图形")}${this.bare("restore", "还原图形")}${this.bare("close", "关闭图形")}</div>
        <view-cube></view-cube>
      </main>
      <section class="command">
        <div class="cmdSide">${paint("grip")}${this.bare("close", "关闭命令行")}${this.bare("wrench", "自定义命令行")}</div>
        <div class="cmdMain">
          <div class="history">命令: _ToolPalettes
命令: 指定对角点或 [栏选(F)/圈围(WP)/圈交(CP)]:</div>
          <div class="prompt">${paint("prompt")}${caret}<input aria-label="命令" placeholder="键入命令" /></div>
        </div>
      </section>
      ${this.status()}
      <div class="balloon" role="status">
        ${paint("bulbOutline")}
        <div class="msg"><strong>Autodesk App Manager</strong><strong>2020-2021 已成功加载。</strong><a href="#">不再显示此消息</a></div>
        <button class="dismiss" aria-label="关闭">${paint("closeThin")}</button>
        <button class="expand" aria-label="展开"></button>
      </div>`;
  }
}
